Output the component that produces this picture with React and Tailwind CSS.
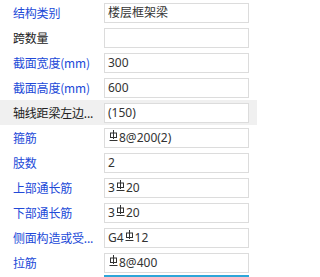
import React from 'react';

function Rebar() {
  return (
    <svg width="9" height="11" viewBox="0 0 9 11" className="inline-block mx-[1px] -translate-y-[2px]" fill="none" stroke="#333" strokeWidth="1">
      <path d="M4.5 0V9" />
      <rect x="1.5" y="3" width="6" height="4.5" />
      <path d="M0.5 10.5H8.5" />
    </svg>
  );
}

const rows = [
  { label: '结构类别', value: '楼层框架梁', blue: true },
  { label: '跨数量', value: '' },
  { label: '截面宽度(mm)', value: '300', blue: true },
  { label: '截面高度(mm)', value: '600', blue: true },
  { label: '轴线距梁左边...', value: '(150)', active: true },
  { label: '箍筋', value: [<Rebar key="r" />, '8@200(2)'], blue: true },
  { label: '肢数', value: '2', blue: true },
  { label: '上部通长筋', value: ['3', <Rebar key="r" />, '20'], blue: true },
  { label: '下部通长筋', value: ['3', <Rebar key="r" />, '20'], blue: true },
  { label: '侧面构造或受...', value: ['G4', <Rebar key="r" />, '12'], blue: true },
  { label: '拉筋', value: [<Rebar key="r" />, '8@400'], blue: true },
];

export default function App() {
  return (
    <div className="w-[257px] h-[277px] overflow-hidden bg-white text-[12px] leading-none" style={{ fontFamily: '"Noto Sans CJK SC", "Microsoft YaHei", sans-serif' }}>
      {rows.map((row, i) => (
        <div key={i} className={`flex items-center h-[25px] ${row.active ? 'bg-[#f0f0f0]' : ''}`}>
          <div className={`w-[104px] pl-[13px] whitespace-nowrap tracking-[-0.2px] ${row.blue ? 'text-[#2149d8]' : 'text-[#222]'}`}>
            {row.label}
          </div>
          <div className="w-[145px] h-[20px] border border-[#dcdcdc] bg-white flex items-center pl-[3px] text-[#333] whitespace-nowrap" style={{ fontFamily: '"Segoe UI", "Noto Sans", "Noto Sans CJK SC", sans-serif' }}>
            {row.value}
          </div>
        </div>
      ))}
      <div className="ml-[104px] w-[145px] h-[2px] bg-[#2ea6d9]" />
    </div>
  );
}
